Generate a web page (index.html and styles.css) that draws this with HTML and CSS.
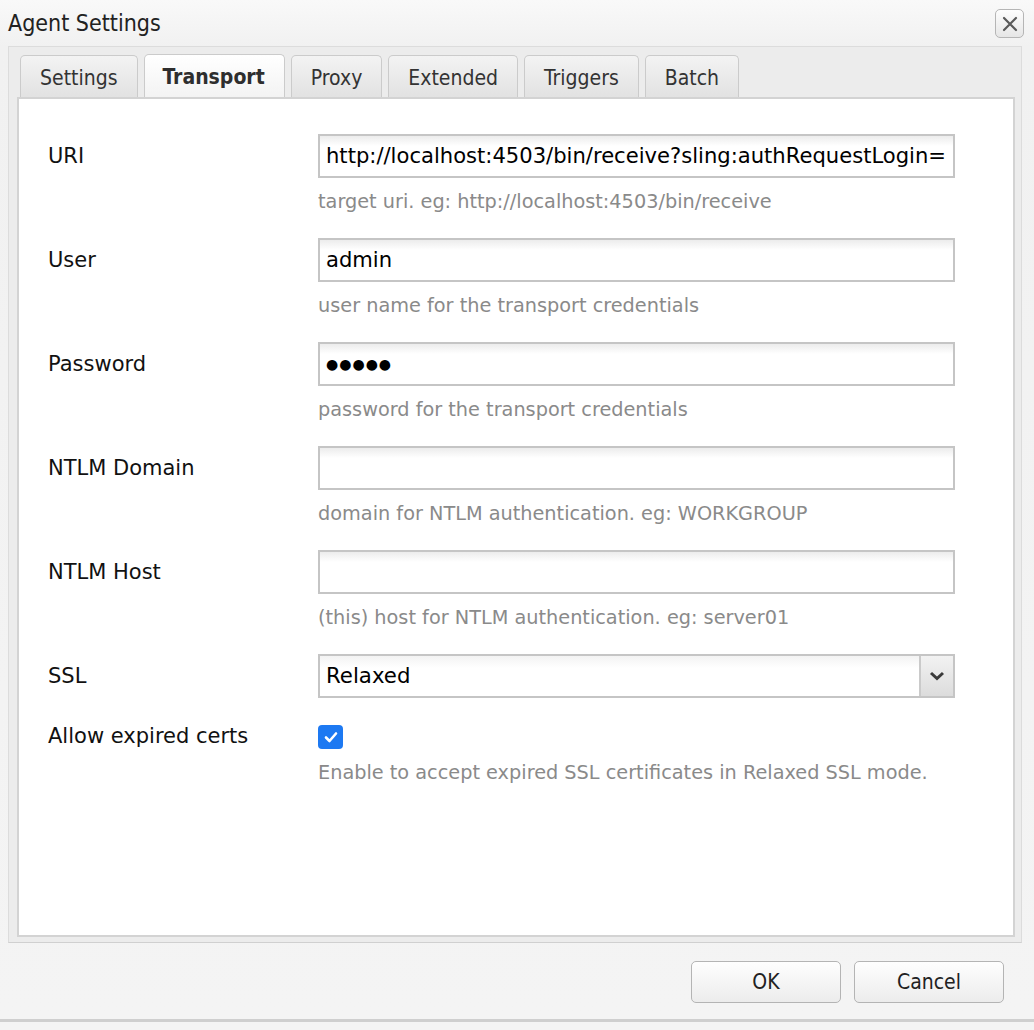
FILE: index.html
```html
<!DOCTYPE html>
<html>
<head>
<meta charset="utf-8">
<title>Agent Settings</title>
<link rel="stylesheet" href="styles.css">
</head>
<body>
<div class="window">
  <div class="titlebar">
    <span class="title">Agent Settings</span>
    <button class="close" aria-label="Close">
      <svg width="16" height="16" viewBox="0 0 16 16"><path d="M2 2 L14 14 M14 2 L2 14" stroke="#5a5a5a" stroke-width="2.2" stroke-linecap="round"/></svg>
    </button>
  </div>
  <div class="tabframe">
    <div class="tabs">
      <div class="tab">Settings</div>
      <div class="tab active">Transport</div>
      <div class="tab">Proxy</div>
      <div class="tab">Extended</div>
      <div class="tab">Triggers</div>
      <div class="tab">Batch</div>
    </div>
    <div class="panel">
      <div class="row">
        <label class="label">URI</label>
        <div class="field">
          <div class="input">http://localhost:4503/bin/receive?sling:authRequestLogin=</div>
          <div class="hint">target uri. eg: http://localhost:4503/bin/receive</div>
        </div>
      </div>
      <div class="row">
        <label class="label">User</label>
        <div class="field">
          <div class="input">admin</div>
          <div class="hint">user name for the transport credentials</div>
        </div>
      </div>
      <div class="row">
        <label class="label">Password</label>
        <div class="field">
          <div class="input dots">&#9679;&#9679;&#9679;&#9679;&#9679;</div>
          <div class="hint">password for the transport credentials</div>
        </div>
      </div>
      <div class="row">
        <label class="label">NTLM Domain</label>
        <div class="field">
          <div class="input"></div>
          <div class="hint">domain for NTLM authentication. eg: WORKGROUP</div>
        </div>
      </div>
      <div class="row">
        <label class="label">NTLM Host</label>
        <div class="field">
          <div class="input"></div>
          <div class="hint">(this) host for NTLM authentication. eg: server01</div>
        </div>
      </div>
      <div class="row row-select">
        <label class="label">SSL</label>
        <div class="field">
          <div class="select">
            <span class="select-value">Relaxed</span>
            <span class="select-btn">
              <svg width="16" height="10" viewBox="0 0 16 10"><path d="M2 2 L8 7.5 L14 2" fill="none" stroke="#3a3a3a" stroke-width="3" stroke-linejoin="miter"/></svg>
            </span>
          </div>
        </div>
      </div>
      <div class="row row-check">
        <label class="label label-check">Allow expired certs</label>
        <div class="field">
          <span class="checkbox">
            <svg width="16" height="16" viewBox="0 0 16 16"><path d="M3 8.5 L6.5 12 L13 4.5" fill="none" stroke="#fff" stroke-width="2.6" stroke-linecap="round" stroke-linejoin="round"/></svg>
          </span>
          <div class="hint">Enable to accept expired SSL certificates in Relaxed SSL mode.</div>
        </div>
      </div>
    </div>
  </div>
  <div class="footer">
    <button class="btn">OK</button>
    <button class="btn">Cancel</button>
  </div>
</div>
</body>
</html>
```
FILE: styles.css
```css
* { box-sizing: border-box; }
html, body { margin: 0; padding: 0; background: #f4f4f4; }
body { font-family: "DejaVu Sans", sans-serif; }

.window {
  width: 1034px;
  height: 1022px;
  background: linear-gradient(#f9f9f9 0, #f1f1f1 46px, #f4f4f4 100%);
  border-bottom: 3px solid #cfcfcf;
  display: flex;
  flex-direction: column;
}

.titlebar {
  height: 46px;
  display: flex;
  align-items: center;
  justify-content: space-between;
  padding: 0 10px 0 8px;
}
.title {
  font-family: "DejaVu Sans Condensed", "DejaVu Sans", sans-serif;
  font-size: 23px; color: #222;
}
.close {
  width: 29px; height: 29px;
  padding: 0;
  border: 1px solid #b5b5b5;
  border-radius: 5px;
  background: linear-gradient(#fdfdfd, #e6e6e6);
  display: flex; align-items: center; justify-content: center;
  margin-top: 1px;
}

.tabframe {
  margin: 0 12px 0 8px;
  height: 897px;
  border: 1px solid #dcdcdc;
  border-bottom-color: #d0d0d0;
  background: #ececec;
  padding: 7px 6px 5px 8px;
  display: flex;
  flex-direction: column;
}

.tabs { display: flex; gap: 6px; padding-left: 3px; height: 43px; align-items: flex-end; }
.tab {
  font-family: "DejaVu Sans Condensed", "DejaVu Sans", sans-serif;
  height: 42px;
  padding: 0 19px;
  border: 1px solid #cbcbcb;
  border-bottom: none;
  border-radius: 5px 5px 0 0;
  background: linear-gradient(#f3f3f3, #e2e2e2);
  font-size: 21px;
  color: #333;
  display: flex; align-items: center;
  padding-top: 2px;
}
.tab.active {
  height: 43px;
  background: linear-gradient(#ffffff, #f3f3f3);
  font-weight: bold;
  color: #2e2e2e;
  padding: 2px 19px 0 18px;
}

.panel {
  flex: 1;
  background: #fff;
  border: 2px solid #d3d3d3;
  padding: 35px 58px 0 29px;
}

.row {
  display: grid;
  grid-template-columns: 270px minmax(0, 1fr);
  height: 104px;
}
.field { min-width: 0; }
.row-select { height: 68px; }
.label {
  font-size: 21px;
  color: #111;
  line-height: 44px;
}
.label-check { line-height: 28px; }

.input {
  height: 44px;
  border: 2px solid #c5c5c5;
  background: linear-gradient(#ececec 0, #ffffff 10px);
  font-size: 21.1px;
  color: #000;
  padding: 0 2px 0 6px;
  line-height: 40px;
  white-space: nowrap;
  overflow: hidden;
}
.input.dots { font-size: 14px; letter-spacing: 1px; }

.hint {
  margin-top: 12px;
  font-size: 19.3px;
  line-height: 24px;
  color: #8a8a8a;
}

.select {
  height: 44px;
  border: 2px solid #c5c5c5;
  background: linear-gradient(#f3f3f3 0, #ffffff 12px);
  display: flex;
  align-items: stretch;
}
.select-value { flex: 1; font-size: 21.3px; line-height: 40px; padding: 0 6px; color: #000; }
.select-btn {
  width: 34px;
  border-left: 2px solid #cacaca;
  background: linear-gradient(#f2f2f2, #dcdcdc);
  display: flex; align-items: center; justify-content: center;
}

.checkbox {
  margin-top: 3px;
  width: 25px; height: 24px;
  border-radius: 4px;
  background: #1d79f2;
  display: flex; align-items: center; justify-content: center;
}

.footer {
  flex: 1;
  display: flex;
  justify-content: flex-end;
  align-items: flex-start;
  gap: 13px;
  padding: 18px 30px 0 0;
}
.btn {
  width: 150px; height: 42px;
  border: 1px solid #b4b4b4;
  border-radius: 5px;
  background: linear-gradient(#fefefe, #ececec);
  font-family: "DejaVu Sans Condensed", "DejaVu Sans", sans-serif;
  font-size: 21px;
  color: #222;
}
```
